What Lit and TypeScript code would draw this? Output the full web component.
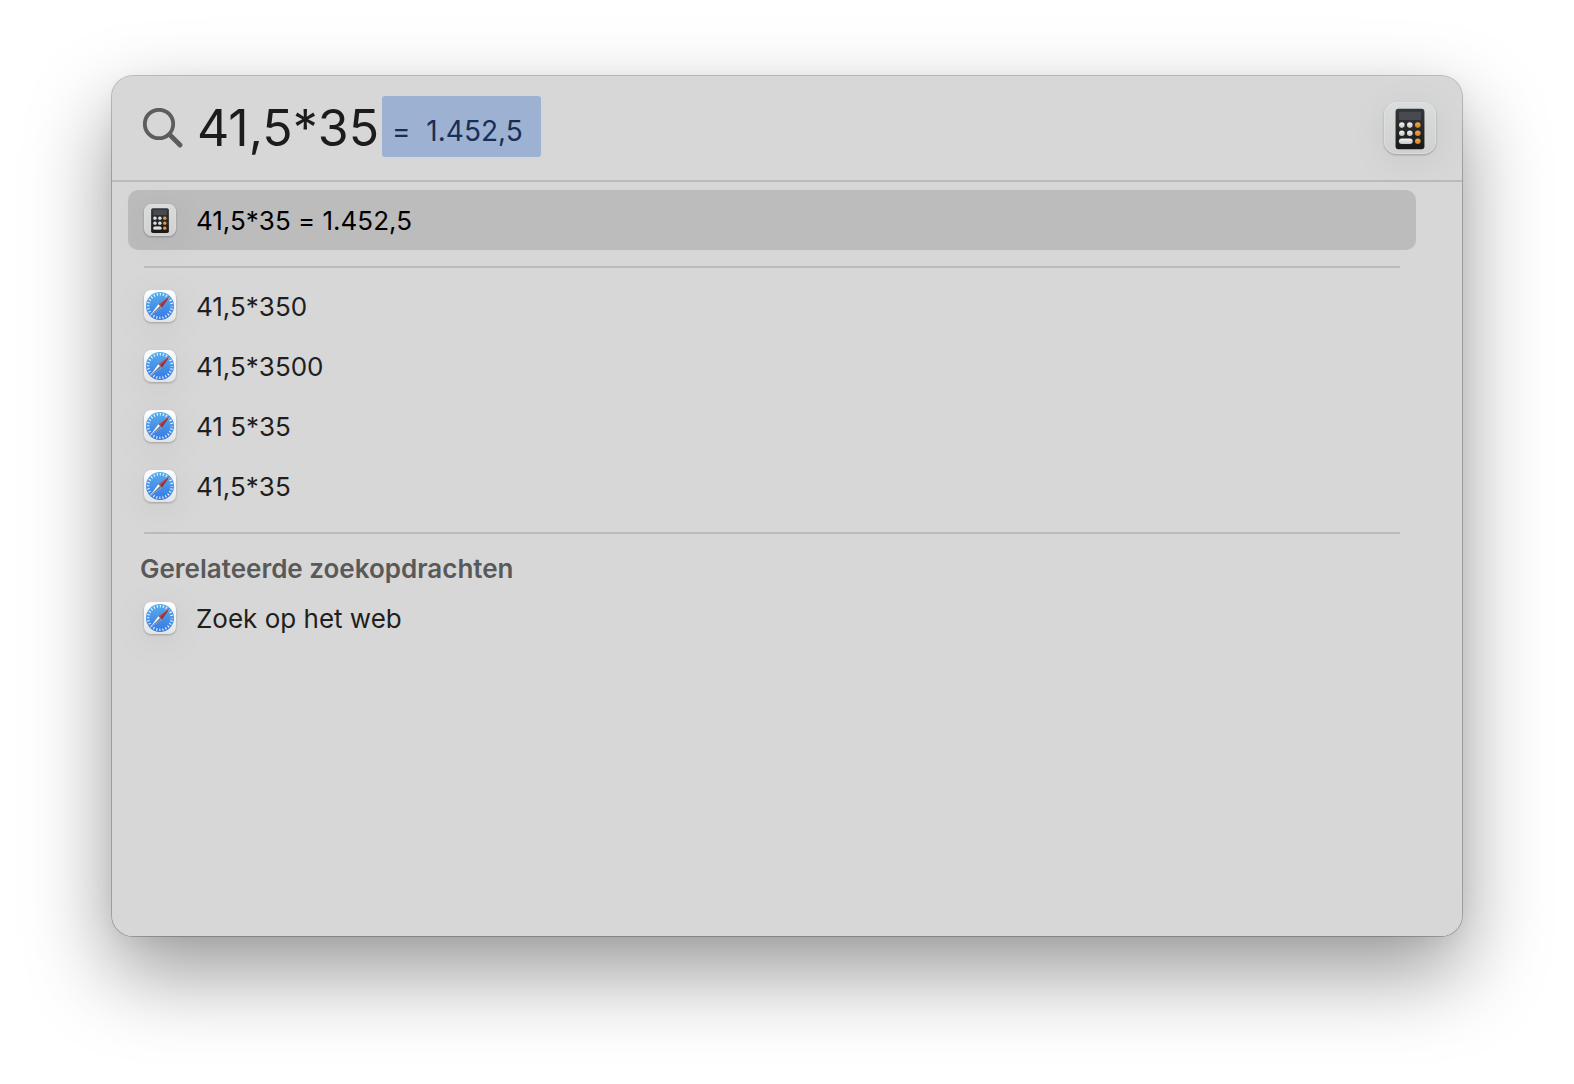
import { LitElement, html, css, svg } from "lit";
import { customElement, property, state } from "lit/decorators.js";

type IconKind = "calculator" | "safari";

interface Result {
  icon: IconKind;
  label: string;
}

interface Section {
  heading?: string;
  results: Result[];
}

const SECTIONS: Section[] = [
  { results: [{ icon: "calculator", label: "41,5*35 = 1.452,5" }] },
  {
    results: [
      { icon: "safari", label: "41,5*350" },
      { icon: "safari", label: "41,5*3500" },
      { icon: "safari", label: "41 5*35" },
      { icon: "safari", label: "41,5*35" },
    ],
  },
  {
    heading: "Gerelateerde zoekopdrachten",
    results: [{ icon: "safari", label: "Zoek op het web" }],
  },
];

@customElement("app-icon")
export class AppIcon extends LitElement {
  @property() kind: IconKind = "safari";

  static styles = css`
    :host {
      display: block;
      flex: none;
    }
    .icon {
      display: block;
      width: 100%;
      height: 100%;
      overflow: visible;
      filter: drop-shadow(0 1px 1px rgba(0, 0, 0, 0.26))
        drop-shadow(0 6px 16px rgba(0, 0, 0, 0.06));
    }
  `;

  private calculator() {
    const keys = [];
    for (let row = 0; row < 3; row++) {
      for (let col = 0; col < 3; col++) {
        if (row === 2 && col < 2) continue;
        keys.push(svg`<circle cx=${18.5 + col * 8.3} cy=${24 + row * 8.4} r="2.9"
          fill=${col === 2 ? "url(#amber)" : "url(#silver)"} />`);
      }
    }
    return svg`
      <defs>
        <linearGradient id="plate" x2="0" y2="1">
          <stop stop-color="#dadddd" /><stop offset="1" stop-color="#d0d0d0" />
        </linearGradient>
        <linearGradient id="body" x2="0" y2="1">
          <stop stop-color="#34373a" /><stop offset="1" stop-color="#191919" />
        </linearGradient>
        <linearGradient id="silver" x2="0" y2="1">
          <stop stop-color="#f5f5f5" /><stop offset="1" stop-color="#c4c4c4" />
        </linearGradient>
        <linearGradient id="amber" x2="0" y2="1">
          <stop stop-color="#f3a94a" /><stop offset="1" stop-color="#d5811a" />
        </linearGradient>
      </defs>
      <rect width="54" height="54" rx="13" fill="url(#plate)" />
      <rect x="0.5" y="0.5" width="53" height="53" rx="12.5" fill="none" stroke="#e2e4e4" stroke-opacity="0.7" />
      <rect x="12" y="7" width="30" height="42" rx="3" fill="url(#body)" />
      <rect x="15.6" y="10" width="22.8" height="8.6" rx="1" fill="#474b50" />
      ${keys}
      <rect x="15.5" y="38" width="14.3" height="5.6" rx="2.8" fill="url(#silver)" />
    `;
  }

  private safari() {
    return svg`
      <defs>
        <linearGradient id="tile" x2="0" y2="1">
          <stop stop-color="#ffffff" /><stop offset="1" stop-color="#e4e4e6" />
        </linearGradient>
        <linearGradient id="dial" x2="0" y2="1">
          <stop stop-color="#58aeea" /><stop offset="1" stop-color="#3478e6" />
        </linearGradient>
      </defs>
      <rect width="54" height="54" rx="12" fill="url(#tile)" />
      <circle cx="27" cy="27" r="23.6" fill="url(#dial)" />
      <circle cx="27" cy="27" r="20" fill="none" stroke="#e9f4ff" stroke-width="4.2"
        stroke-dasharray="1.9 3.336" stroke-dashoffset="0.95" />
      <path d="M44 10 24.2 24.2 29.8 29.8Z" fill="#c2484e" />
      <path d="M44 10 27 27 29.8 29.8Z" fill="#8a3440" />
      <path d="M10 44 24.2 24.2 29.8 29.8Z" fill="#ffffff" />
      <path d="M10 44 27 27 29.8 29.8Z" fill="#6b7f9f" />
      <path d="M44 10 10 44" stroke="#33455f" stroke-opacity="0.35" stroke-width="1" />
    `;
  }

  render() {
    return html`<svg class="icon" viewBox="0 0 54 54" aria-hidden="true">
      ${this.kind === "calculator" ? this.calculator() : this.safari()}
    </svg>`;
  }
}

@customElement("app-root")
export class AppRoot extends LitElement {
  @state() private query = "41,5*35";
  @state() private selected = "0-0";

  static styles = css`
    :host {
      display: block;
      box-sizing: border-box;
      min-height: 100vh;
      padding: 75px 111px 147px;
      background: #ffffff;
      color: #1f1f1f;
      font-family: Inter, "Liberation Sans", sans-serif;
      font-size: 26px;
      font-feature-settings: "calt" 0;
      line-height: 32px;
    }
    .panel {
      box-sizing: border-box;
      min-height: calc(100vh - 222px);
      border: 1px solid rgba(0, 0, 0, 0.22);
      border-radius: 22px;
      background: #d7d7d7;
      background-clip: padding-box;
      box-shadow: 0 36px 84px rgba(0, 0, 0, 0.4), 0 4px 20px rgba(0, 0, 0, 0.04);
    }
    .search {
      display: flex;
      align-items: center;
      height: 104px;
      padding: 0 26px 0 31px;
      border-bottom: 2px solid #bbbbbb;
    }
    .glass {
      flex: none;
      width: 40px;
      height: 40px;
    }
    .query {
      field-sizing: content;
      min-width: 0;
      margin: 0 3px 0 14px;
      padding: 0;
      border: 0;
      outline: 0;
      background: none;
      color: #1c1c1c;
      font: inherit;
      font-feature-settings: inherit;
      font-size: 50px;
      line-height: 62px;
    }
    .completion {
      flex: none;
      margin-bottom: 3px;
      padding: 9px 18px 0 10px;
      border-radius: 3px;
      background: #9db2d3;
      color: #1a2e55;
      font-size: 28px;
      line-height: 52px;
      white-space: pre;
    }
    .source {
      width: 52px;
      height: 52px;
      margin-left: auto;
    }
    .results {
      padding: 8px 46px 16px 16px;
    }
    .section + .section::before {
      content: "";
      display: block;
      height: 2px;
      margin: 16px 16px 8px;
      background: #bbbbbb;
    }
    .heading {
      margin: 0;
      padding: 11px 12px 3px;
      color: #595959;
      font-size: 26px;
      font-weight: 600;
      line-height: 32px;
    }
    .list {
      margin: 0;
      padding: 0;
      list-style: none;
    }
    .row {
      display: flex;
      align-items: center;
      gap: 20px;
      width: 100%;
      height: 60px;
      padding: 0 16px;
      border: 0;
      border-radius: 10px;
      background: none;
      color: inherit;
      font: inherit;
      font-feature-settings: inherit;
      text-align: left;
    }
    .row[aria-current="true"] {
      background: #bcbcbc;
      color: #000000;
    }
    .label {
      padding-top: 2px;
    }
    .thumb {
      width: 32px;
      height: 32px;
    }
  `;

  private onInput(event: Event) {
    this.query = (event.target as HTMLInputElement).value;
  }

  private renderRow(result: Result, id: string) {
    return html`<li>
      <button
        class="row"
        type="button"
        aria-current=${this.selected === id ? "true" : "false"}
        @click=${() => (this.selected = id)}
      >
        <app-icon class="thumb" .kind=${result.icon}></app-icon>
        <span class="label">${result.label}</span>
      </button>
    </li>`;
  }

  render() {
    return html`
      <main class="panel">
        <div class="search">
          <svg class="glass" viewBox="0 0 40 40" fill="none" stroke="#5d5d5d" stroke-linecap="round" aria-hidden="true">
            <circle cx="16" cy="16" r="14.2" stroke-width="3.8" />
            <path d="M26.5 26.5 37 37" stroke-width="4.8" />
          </svg>
          <input class="query" type="text" aria-label="Spotlight" .value=${this.query} @input=${this.onInput} />
          <span class="completion">=&nbsp; 1.452,5</span>
          <app-icon class="source" .kind=${"calculator"}></app-icon>
        </div>
        <div class="results">
          ${SECTIONS.map(
            (section, s) => html`<section class="section">
              ${section.heading ? html`<h2 class="heading">${section.heading}</h2>` : ""}
              <ul class="list">
                ${section.results.map((result, r) => this.renderRow(result, `${s}-${r}`))}
              </ul>
            </section>`,
          )}
        </div>
      </main>
    `;
  }
}
